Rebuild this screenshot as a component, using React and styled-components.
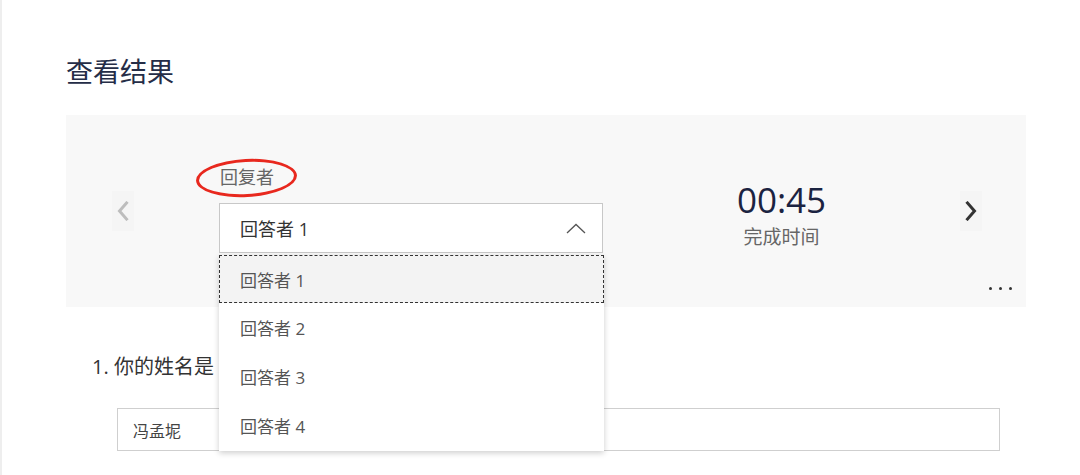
import styled, { createGlobalStyle } from "styled-components";

const GlobalStyle = createGlobalStyle`
  html, body {
    margin: 0;
    background: #ffffff;
  }
  body {
    font-family: "Open Sans", "Noto Sans CJK SC", sans-serif;
  }
`;

const StyledPage = styled.div`
  min-height: 475px;
  box-sizing: border-box;
  border-left: 2px solid #eeeeee;
  padding: 53px 54px 0 64px;
`;
const StyledTitle = styled.h1`
  margin: 0 0 25px;
  font-size: 27px;
  line-height: 37px;
  font-weight: 400;
  color: #252d47;
`;
const StyledPanel = styled.div`
  position: relative;
  display: flex;
  align-items: center;
  height: 192px;
  padding: 0 44px 0 46px;
  background-color: #f8f8f8;
`;
const StyledNavButton = styled.button`
  display: flex;
  align-items: center;
  justify-content: center;
  width: 22px;
  height: 40px;
  padding: 0;
  border: none;
  background-color: #f5f5f5;
  cursor: pointer;
`;
const StyledResponder = styled.div`
  display: flex;
  flex-direction: column;
  width: 384px;
  margin-left: 85px;
  margin-top: -4px;
`;
const StyledLabel = styled.div`
  position: relative;
  align-self: flex-start;
  margin-left: 1px;
  font-size: 18px;
  line-height: 24px;
  color: #666666;
`;
const StyledCircle = styled.span`
  position: absolute;
  left: -24px;
  top: -6px;
  width: 101px;
  height: 38px;
  box-sizing: border-box;
  border: 3px solid #e8281e;
  border-radius: 50%;
  transform: rotate(-3deg);
`;
const StyledSelectWrap = styled.div`
  position: relative;
  margin-top: 14px;
`;
const StyledSelect = styled.div`
  display: flex;
  align-items: center;
  justify-content: space-between;
  height: 50px;
  box-sizing: border-box;
  padding: 0 16px 0 20px;
  border: 1px solid #c8c8c8;
  background-color: #ffffff;
  font-size: 18px;
  color: #333333;
`;
const StyledMenu = styled.ul`
  position: absolute;
  top: calc(100% + 2px);
  left: 0;
  width: 385px;
  margin: 0;
  padding: 0 0 1px;
  list-style: none;
  background-color: #ffffff;
  box-shadow: 0 2px 6px rgba(0, 0, 0, 0.2);
  z-index: 2;
`;
const StyledOption = styled.li`
  display: flex;
  align-items: center;
  height: ${(p) => (p.$active ? "48px" : "49px")};
  box-sizing: border-box;
  padding-left: 20px;
  font-size: 17px;
  color: #555555;
  border: 1px dashed ${(p) => (p.$active ? "#333333" : "transparent")};
  background-color: ${(p) => (p.$active ? "#f3f3f3" : "#ffffff")};
`;
const StyledTimer = styled.div`
  flex: 1;
  display: flex;
  flex-direction: column;
  align-items: center;
  margin-top: 5px;
`;
const StyledTime = styled.div`
  font-size: 35px;
  line-height: 42px;
  color: #1b2341;
`;
const StyledTimeLabel = styled.div`
  margin-top: 4px;
  font-size: 19px;
  line-height: 24px;
  color: #666666;
`;
const StyledMore = styled.button`
  position: absolute;
  right: 14px;
  bottom: 17px;
  display: flex;
  gap: 7px;
  padding: 0;
  border: none;
  background: transparent;
`;
const StyledDot = styled.span`
  width: 3px;
  height: 3px;
  border-radius: 50%;
  background-color: #333333;
`;
const StyledQuestion = styled.div`
  margin: 46px 0 0 26px;
  font-size: 20px;
  line-height: 28px;
  color: #333333;
  white-space: nowrap;
`;
const StyledAnswer = styled.div`
  display: flex;
  align-items: center;
  height: 43px;
  box-sizing: border-box;
  margin: 27px 26px 0 51px;
  padding-left: 15px;
  border: 1px solid #cfcfcf;
  font-size: 16px;
  color: #444444;
`;

const options = ["回答者 1", "回答者 2", "回答者 3", "回答者 4"];

function Chevron({ dir, color, width }) {
  const points = dir === "left" ? "9,2 2,10 9,18" : "2,2 9,10 2,18";
  return (
    <svg width="12" height="20" viewBox="0 0 11 20">
      <polyline
        points={points}
        fill="none"
        stroke={color}
        strokeWidth={width}
        strokeLinecap="square"
      />
    </svg>
  );
}

function App() {
  return (
    <StyledPage>
      <GlobalStyle />
      <StyledTitle>查看结果</StyledTitle>
      <StyledPanel>
        <StyledNavButton>
          <Chevron dir="left" color="#bdbdbd" width={3} />
        </StyledNavButton>
        <StyledResponder>
          <StyledLabel>
            回复者
            <StyledCircle />
          </StyledLabel>
          <StyledSelectWrap>
            <StyledSelect>
              <span>回答者 1</span>
              <svg width="20" height="11" viewBox="0 0 20 11">
                <polyline
                  points="1,10 10,1.5 19,10"
                  fill="none"
                  stroke="#555"
                  strokeWidth="1.3"
                />
              </svg>
            </StyledSelect>
            <StyledMenu>
              {options.map((o, i) => (
                <StyledOption key={o} $active={i === 0}>
                  {o}
                </StyledOption>
              ))}
            </StyledMenu>
          </StyledSelectWrap>
        </StyledResponder>
        <StyledTimer>
          <StyledTime>00:45</StyledTime>
          <StyledTimeLabel>完成时间</StyledTimeLabel>
        </StyledTimer>
        <StyledNavButton>
          <Chevron dir="right" color="#333333" width={3} />
        </StyledNavButton>
        <StyledMore>
          <StyledDot />
          <StyledDot />
          <StyledDot />
        </StyledMore>
      </StyledPanel>
      <StyledQuestion>1. 你的姓名是</StyledQuestion>
      <StyledAnswer>冯孟坭</StyledAnswer>
    </StyledPage>
  );
}

export default App;
